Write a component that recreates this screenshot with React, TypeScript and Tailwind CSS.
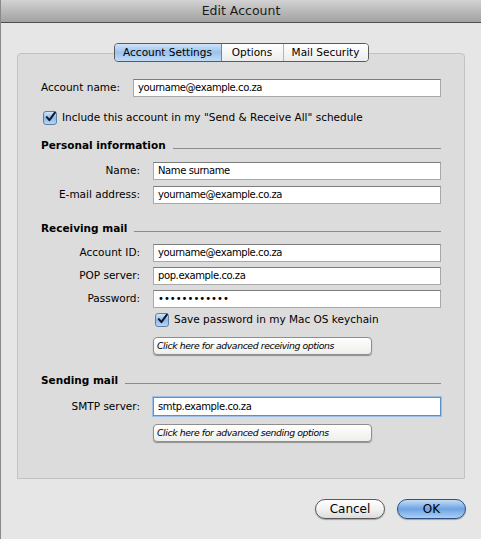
import type { ReactNode } from 'react';

const font = { fontFamily: '"DejaVu Sans", "Lucida Grande", sans-serif' };

const Check = () => (
  <span className="flex size-[14px] shrink-0 items-center justify-center rounded-[3px] border border-[#5d7ea6] bg-gradient-to-b from-[#d4e6fa] via-[#8fb8e6] to-[#b9d6f5]">
    <svg width="12" height="12" viewBox="0 0 12 12" className="-mt-[2px] ml-[1px]">
      <path d="M2 6.2 L4.8 9.4 L10.8 1.2" fill="none" stroke="#101830" strokeWidth="2.2" strokeLinecap="round" strokeLinejoin="round" />
    </svg>
  </span>
);

const Input = ({ value, focused = false, secret = false }: { value: string, focused?: boolean, secret?: boolean }) => (
  <div
    className={
      focused
        ? 'flex h-[19px] flex-1 items-center border border-[#5b8fd0] bg-white pl-[4px] pb-[1px] text-[10px] tracking-[-0.4px] shadow-[0_0_0_1px_#9cc0ea]'
        : `flex h-[18px] flex-1 items-center border border-[#a8a8a8] border-t-[#7c7c7c] bg-white pl-[4px] pb-[1px] ${secret ? 'text-[10px]' : 'text-[10px] tracking-[-0.4px]'}`
    }
  >
    {value}
  </div>
);

const Field = ({ label, children, className = '' }: { label: string, children: ReactNode, className?: string }) => (
  <div className={`flex items-center ${className}`}>
    <span className="w-[100px] shrink-0 pr-[1px] text-right text-[10.5px]">{label}</span>
    <div className="ml-[12px] flex flex-1">{children}</div>
  </div>
);

const Section = ({ title, className = '' }: { title: string, className?: string }) => (
  <div className={`flex h-[14px] items-center gap-[7px] ${className}`}>
    <span className="text-[10.5px] font-bold leading-[14px]">{title}</span>
    <div className="mt-[6px] h-px flex-1 bg-[#8c8c8c]" />
  </div>
);

const LinkButton = ({ label, className = '' }: { label: string, className?: string }) => (
  <div className={`ml-[112px] flex h-[18px] w-[219px] items-center rounded-[4px] border border-[#8e8e8e] bg-gradient-to-b from-white to-[#eeeeea] pl-[3px] text-[9.3px] tracking-[-0.4px] italic shadow-[0_1px_1px_rgba(0,0,0,0.35)] ${className}`}>
    {label}
  </div>
);

const App = () => {
  return (
    <div className="flex h-[539px] w-[481px] flex-col border-l border-[#8a8a8a] bg-[#e6e6e6] text-black" style={font}>
      <div className="flex h-[23px] shrink-0 items-center justify-center border-b border-[#4e4e4e] bg-gradient-to-b from-[#d2d2d2] to-[#a2a2a2] text-[12.5px] text-[#1a1a1a]">
        Edit Account
      </div>

      <div className="mx-[16px] mt-[30px] flex h-[426px] flex-col rounded-t-[4px] border border-[#c2c2c2] bg-[#dcdcdc] px-[23px]">
        <div className="-mt-[11px] flex justify-center">
          <div className="flex h-[19px] overflow-hidden rounded-[4px] border border-[#5a5a5a] text-[10.5px]">
            <div className="flex w-[107px] items-center justify-center border-r border-[#6f86a6] bg-gradient-to-b from-[#cfe3f8] via-[#9cc3ec] to-[#c2dcf6]">Account Settings</div>
            <div className="flex w-[62px] items-center justify-center border-r border-[#b4b4b4] bg-gradient-to-b from-white to-[#ececec]">Options</div>
            <div className="flex w-[84px] items-center justify-center bg-gradient-to-b from-white to-[#ececec]">Mail Security</div>
          </div>
        </div>

        <div className="mt-[17px] flex items-center">
          <span className="w-[92px] shrink-0 text-[10.5px]">Account name:</span>
          <Input value="yourname@example.co.za" />
        </div>

        <div className="mt-[13px] flex h-[16px] items-center gap-[5px] pl-[2px] text-[10.5px]">
          <Check />
          <span>Include this account in my "Send &amp; Receive All" schedule</span>
        </div>

        <Section title="Personal information" className="mt-[12px]" />
        <Field label="Name:" className="mt-[10px]"><Input value="Name surname" /></Field>
        <Field label="E-mail address:" className="mt-[6px]"><Input value="yourname@example.co.za" /></Field>

        <Section title="Receiving mail" className="mt-[17px]" />
        <Field label="Account ID:" className="mt-[9px]"><Input value="yourname@example.co.za" /></Field>
        <Field label="POP server:" className="mt-[5px]"><Input value="pop.example.co.za" /></Field>
        <Field label="Password:" className="mt-[5px]"><Input value="••••••••••••" secret /></Field>

        <div className="mt-[4px] ml-[114px] flex h-[16px] items-center gap-[5px] text-[10.5px]">
          <Check />
          <span>Save password in my Mac OS keychain</span>
        </div>

        <LinkButton label="Click here for advanced receiving options" className="mt-[9px]" />

        <Section title="Sending mail" className="mt-[18px]" />
        <Field label="SMTP server:" className="mt-[10px]"><Input value="smtp.example.co.za" focused /></Field>
        <LinkButton label="Click here for advanced sending options" className="mt-[8px]" />
      </div>

      <div className="mt-[20px] flex justify-end gap-[12px] pr-[15px] text-[12px]">
        <div className="flex h-[20px] w-[70px] items-center justify-center rounded-full border border-[#5a5a5a] bg-gradient-to-b from-white via-[#f2f2f2] to-[#dcdcdc] shadow-[0_1px_1px_rgba(0,0,0,0.3)]">
          Cancel
        </div>
        <div className="flex h-[20px] w-[69px] items-center justify-center rounded-full border border-[#2f4f80] bg-gradient-to-b from-[#c3dcf7] via-[#6ea4e2] to-[#a9d0f7] shadow-[0_1px_1px_rgba(0,0,0,0.3)]">
          OK
        </div>
      </div>
    </div>
  );
};

export default App;
